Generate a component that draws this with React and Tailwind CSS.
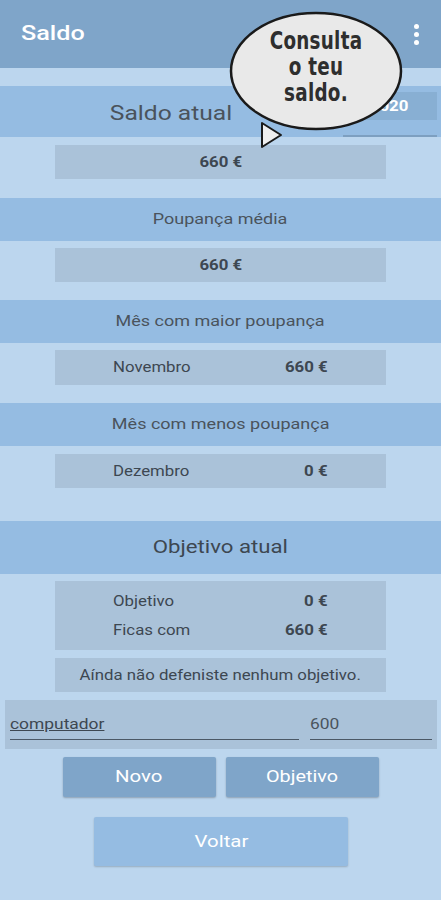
function S({ children, o = "origin-center", className = "" }) {
  return <span className={`inline-block scale-x-[1.2] ${o} ${className}`}>{children}</span>;
}

export default function App() {
  const font = { fontFamily: "Roboto, 'Liberation Sans', sans-serif" };
  return (
    <div className="w-[441px] h-[900px] bg-[#bcd6ee] relative overflow-hidden text-[#3d4751]" style={font}>
      <div className="h-[68px] bg-[#7fa5c9] flex items-center justify-between pl-[21px] pr-[22px]">
        <S o="origin-left" className="text-white text-[21px] font-medium">Saldo</S>
        <div className="flex flex-col gap-[3px] items-center">
          <span className="w-[5px] h-[5px] rounded-full bg-white"></span>
          <span className="w-[5px] h-[5px] rounded-full bg-white"></span>
          <span className="w-[5px] h-[5px] rounded-full bg-white"></span>
        </div>
      </div>

      <div className="mt-[18px] h-[51px] bg-[#95bce2] flex items-center">
        <div className="flex-1 text-center text-[20.5px] text-[#4a535c] pt-[4px]"><S>Saldo atual</S></div>
        <div className="w-[100px] h-[51px] flex flex-col justify-between pt-[6px] pr-[4px]">
          <div className="h-[28px] bg-[#88afd3] flex items-center justify-center text-white text-[14px] font-bold"><S>2020</S></div>
          <div className="h-[2px] bg-[#7d9fc0] ml-[2px]"></div>
        </div>
      </div>
      <div className="mt-[8px] ml-[55px] w-[331px] h-[34px] bg-[#aac2d9] flex items-center justify-center text-[14px] font-bold"><S>660 €</S></div>

      <div className="mt-[19px] h-[43px] bg-[#95bce2] flex items-center justify-center text-[15px] text-[#4a535c]"><S>Poupança média</S></div>
      <div className="mt-[7px] ml-[55px] w-[331px] h-[34px] bg-[#aac2d9] flex items-center justify-center text-[14px] font-bold"><S>660 €</S></div>

      <div className="mt-[18px] h-[43px] bg-[#95bce2] flex items-center justify-center text-[15px] text-[#4a535c]"><S>Mês com maior poupança</S></div>
      <div className="mt-[7px] ml-[55px] w-[331px] h-[35px] bg-[#aac2d9] flex items-center justify-between px-[58px] text-[14px]">
        <S o="origin-left">Novembro</S>
        <S o="origin-right" className="font-bold">660 €</S>
      </div>

      <div className="mt-[18px] h-[43px] bg-[#95bce2] flex items-center justify-center text-[15px] text-[#4a535c]"><S>Mês com menos poupança</S></div>
      <div className="mt-[8px] ml-[55px] w-[331px] h-[34px] bg-[#aac2d9] flex items-center justify-between px-[58px] text-[14px]">
        <S o="origin-left">Dezembro</S>
        <S o="origin-right" className="font-bold">0 €</S>
      </div>

      <div className="mt-[33px] h-[53px] bg-[#95bce2] flex items-center justify-center text-[18.5px] text-[#3d4751]"><S>Objetivo atual</S></div>
      <div className="mt-[7px] ml-[55px] w-[331px] h-[69px] bg-[#aac2d9] flex flex-col justify-center gap-[8px] px-[58px] text-[14px]">
        <div className="flex justify-between"><S o="origin-left">Objetivo</S><S o="origin-right" className="font-bold">0 €</S></div>
        <div className="flex justify-between"><S o="origin-left">Ficas com</S><S o="origin-right" className="font-bold">660 €</S></div>
      </div>
      <div className="mt-[8px] ml-[55px] w-[331px] h-[34px] bg-[#aac2d9] flex items-center justify-center text-[14px]"><S>Aínda não defeniste nenhum objetivo.</S></div>

      <div className="mt-[8px] ml-[5px] w-[432px] h-[49px] bg-[#aac2d9] flex items-end pb-[9px] px-[5px] gap-[11px] text-[14.5px]">
        <div className="w-[289px] border-b-[1.5px] border-[#4b5866] pb-[3px]">
          <S o="origin-left" className="underline">computador</S>
        </div>
        <div className="flex-1 border-b-[1.5px] border-[#4b5866] pb-[3px] text-[#4b545d]"><S o="origin-left">600</S></div>
      </div>

      <div className="mt-[8px] flex justify-center gap-[10px]">
        <div className="w-[153px] h-[40px] bg-[#7fa5c9] rounded-[2px] shadow-[0_1px_2px_rgba(0,0,0,0.25)] flex items-center justify-center text-white text-[17px]"><S>Novo</S></div>
        <div className="w-[153px] h-[40px] bg-[#7fa5c9] rounded-[2px] shadow-[0_1px_2px_rgba(0,0,0,0.25)] flex items-center justify-center text-white text-[16.5px]"><S>Objetivo</S></div>
      </div>
      <div className="mt-[20px] ml-[94px] w-[254px] h-[49px] bg-[#95bce2] rounded-[2px] shadow-[0_1px_2px_rgba(0,0,0,0.2)] flex items-center justify-center text-white text-[17px]"><S>Voltar</S></div>

      <div className="absolute left-[229px] top-[11px] w-[174px] h-[120px]">
        <svg className="absolute left-0 top-0" width="174" height="140" viewBox="0 0 174 140">
          <polygon points="33,112 33,136 52,124" fill="#efefef" stroke="#1a1a1a" strokeWidth="2" strokeLinejoin="round" />
          <ellipse cx="87" cy="60" rx="85" ry="58" fill="#e9e9e9" stroke="#1a1a1a" strokeWidth="2.5" />
        </svg>
        <div className="absolute left-0 top-[17px] w-[174px] text-center text-[#2e2e2e] text-[24px] font-black leading-[26px] tracking-[0.3px] scale-x-[0.85]" style={{ fontFamily: "'DejaVu Sans Condensed', 'Liberation Sans Narrow', sans-serif" }}>
          Consulta<br />o teu<br />saldo.
        </div>
      </div>
    </div>
  );
}
